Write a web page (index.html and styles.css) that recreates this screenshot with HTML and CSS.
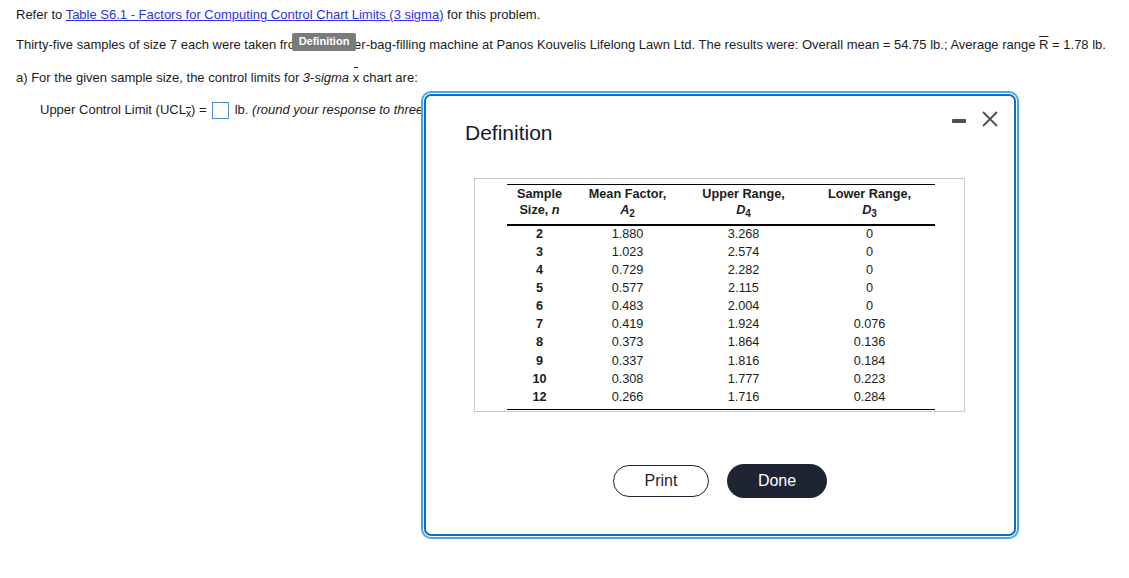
FILE: index.html
```html
<!DOCTYPE html>
<html lang="en">

<head>
  <meta charset="UTF-8">
  <title>Definition</title>
  <link rel="stylesheet" href="styles.css">
</head>

<body>
  <div class="page">
    <p class="line l1">Refer to <a href="#" class="link">Table S6.1 - Factors for Computing Control Chart Limits (3 sigma)</a> for this problem.</p>
    <p class="line l2">Thirty-five samples of size 7 each were taken from a fertilizer-bag-filling machine at Panos Kouvelis Lifelong Lawn Ltd. The results were: Overall mean = 54.75 lb.; Average range <span class="bar">R</span> = 1.78 lb.</p>
    <p class="line l3">a) For the given sample size, the control limits for <i>3-sigma</i> <span class="xbar">x</span> chart are:</p>
    <p class="line l4">Upper Control Limit (UCL<sub class="sub"><span class="bar">x</span></sub>) = <span class="answer"></span> lb. <i>(round your response to three decimal places).</i></p>

    <div class="tip">Definition</div>

    <div class="modal">
      <div class="modal-tools">
        <span class="min"></span>
        <svg class="close" width="16" height="16" viewBox="0 0 16 16">
          <path d="M1 1 L15 15 M15 1 L1 15" stroke="#4b5059" stroke-width="1.8" fill="none" />
        </svg>
      </div>
      <div class="modal-title">Definition</div>
      <div class="table-box">
        <table class="factors">
          <thead>
            <tr>
              <th class="c1">Sample<br>Size, <i>n</i></th>
              <th class="c2">Mean Factor,<br><i>A</i><sub>2</sub></th>
              <th class="c3">Upper Range,<br><i>D</i><sub>4</sub></th>
              <th class="c4">Lower Range,<br><i>D</i><sub>3</sub></th>
            </tr>
          </thead>
          <tbody>
            <tr><td class="n">2</td><td>1.880</td><td>3.268</td><td>0</td></tr>
            <tr><td class="n">3</td><td>1.023</td><td>2.574</td><td>0</td></tr>
            <tr><td class="n">4</td><td>0.729</td><td>2.282</td><td>0</td></tr>
            <tr><td class="n">5</td><td>0.577</td><td>2.115</td><td>0</td></tr>
            <tr><td class="n">6</td><td>0.483</td><td>2.004</td><td>0</td></tr>
            <tr><td class="n">7</td><td>0.419</td><td>1.924</td><td>0.076</td></tr>
            <tr><td class="n">8</td><td>0.373</td><td>1.864</td><td>0.136</td></tr>
            <tr><td class="n">9</td><td>0.337</td><td>1.816</td><td>0.184</td></tr>
            <tr><td class="n">10</td><td>0.308</td><td>1.777</td><td>0.223</td></tr>
            <tr class="last"><td class="n">12</td><td>0.266</td><td>1.716</td><td>0.284</td></tr>
          </tbody>
        </table>
      </div>
      <div class="modal-btns">
        <button class="btn btn-print">Print</button>
        <button class="btn btn-done">Done</button>
      </div>
    </div>
  </div>
</body>

</html>
```

FILE: styles.css
```css
body {
  margin: 0;
  background: #fff;
  font-family: "Liberation Sans", Arial, sans-serif;
  font-size: 13px;
  color: #1c1c1c;
}

.page {
  position: relative;
  width: 1129px;
  height: 578px;
  overflow: hidden;
  padding: 7px 0 0 16px;
  box-sizing: border-box;
}

.line {
  margin: 0;
  line-height: 16px;
  white-space: nowrap;
}

.l1 {
  margin-bottom: 14px;
}

.l2 {
  margin-bottom: 17px;
}

.l3 {
  margin-bottom: 16px;
}

.l4 {
  padding-left: 24px;
}

.link {
  color: #3030e8;
  text-decoration: underline;
}

.bar {
  text-decoration: overline;
}

.xbar {
  display: inline-block;
  position: relative;
}

.xbar::before {
  content: "";
  position: absolute;
  left: 1px;
  right: 1px;
  top: -3px;
  border-top: 1px solid #1c1c1c;
}

.sub {
  font-size: 10px;
  vertical-align: -3px;
  line-height: 0;
}

.answer {
  display: inline-block;
  width: 15px;
  height: 15px;
  border: 1px solid #4a8fd6;
  vertical-align: -5px;
  margin: 0 2px;
}

.tip {
  position: absolute;
  left: 292px;
  top: 33px;
  width: 64px;
  height: 18px;
  background: #7b7b7b;
  color: #fff;
  font-size: 11px;
  font-weight: bold;
  line-height: 17px;
  text-align: center;
  border-radius: 2px;
}

.modal {
  position: absolute;
  left: 424px;
  top: 94px;
  width: 592px;
  height: 442px;
  box-sizing: border-box;
  background: #fff;
  border: 2px solid #0a70c4;
  border-radius: 7px;
  box-shadow: 0 0 0 1px #fff, 0 0 0 3px #47a6e6;
  display: flex;
  flex-direction: column;
  align-items: flex-start;
}

.modal-tools {
  position: absolute;
  top: 15px;
  right: 16px;
  display: flex;
  align-items: center;
  gap: 16px;
}

.min {
  width: 14px;
  height: 4px;
  background: #4b5059;
  border-radius: 1px;
  margin-top: 3px;
}

.modal-title {
  margin: 25px 0 0 39px;
  font-size: 21px;
  line-height: 24px;
  color: #141a2a;
}

.table-box {
  margin: 33px 0 0 48px;
  width: 491px;
  height: 234px;
  box-sizing: border-box;
  border: 1px solid #c8c8c8;
  padding-top: 5px;
}

.factors {
  margin: 0 auto;
  width: 428px;
  border-collapse: collapse;
  border-top: 1px solid #000;
  border-bottom: 1px solid #000;
  position: relative;
  left: 1px;
  font-size: 12.7px;
}

.factors th {
  font-weight: bold;
  line-height: 16px;
  padding: 1px 0 6px;
  border-bottom: 2px solid #000;
  text-align: center;
}

.factors sub {
  font-size: 10px;
  line-height: 0;
  vertical-align: -3px;
}

.factors td {
  text-align: center;
  line-height: 18.1px;
  padding: 0;
}

.factors tbody tr:first-child td {
  padding-top: 0;
  line-height: 17px;
}

.factors .last td {
  padding-bottom: 3px;
}

.factors .n {
  font-weight: bold;
}

.c1 {
  width: 66px;
}

.c2 {
  width: 110px;
}

.c3 {
  width: 122px;
}

.c4 {
  width: 130px;
}

.modal-btns {
  align-self: stretch;
  margin-top: 52px;
  display: flex;
  justify-content: center;
  align-items: center;
  gap: 18px;
}

.btn {
  font-family: "Liberation Sans", Arial, sans-serif;
  font-size: 16px;
  border-radius: 17px;
  cursor: pointer;
}

.btn-print {
  width: 96px;
  height: 32px;
  background: #fff;
  color: #1e2433;
  border: 1.5px solid #1e2433;
}

.btn-done {
  width: 100px;
  height: 34px;
  background: #1e2433;
  color: #fff;
  border: none;
}
```
